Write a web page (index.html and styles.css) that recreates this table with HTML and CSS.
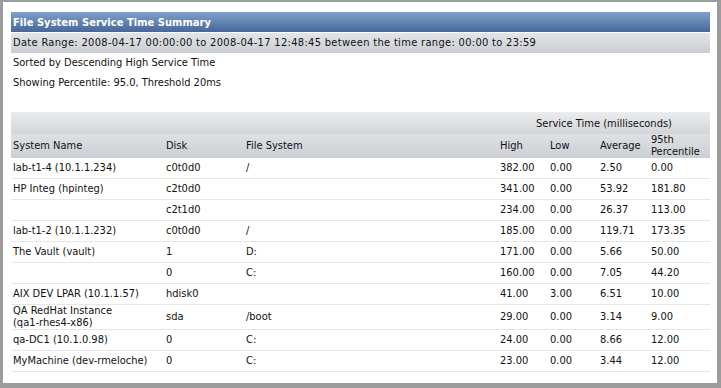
FILE: index.html
```html
<!DOCTYPE html>
<html>
<head>
<meta charset="utf-8">
<link rel="stylesheet" href="styles.css">
</head>
<body>
<div class="frame">
  <div class="panel">
    <div class="title">File System Service Time Summary</div>
    <div class="daterange">Date Range: 2008-04-17 00:00:00 to 2008-04-17 12:48:45 between the time range: 00:00 to 23:59</div>
    <div class="info">Sorted by Descending High Service Time</div>
    <div class="info">Showing Percentile: 95.0, Threshold 20ms</div>
    <table class="report">
      <colgroup>
        <col class="c-sys"><col class="c-disk"><col class="c-fs"><col class="c-high"><col class="c-low"><col class="c-avg"><col class="c-pct">
      </colgroup>
      <thead>
        <tr class="band1">
          <th colspan="3"></th>
          <th colspan="4" class="group">Service Time (milliseconds)</th>
        </tr>
        <tr class="band2">
          <th>System Name</th><th>Disk</th><th>File System</th><th>High</th><th>Low</th><th>Average</th><th class="pct">95th<br>Percentile</th>
        </tr>
      </thead>
      <tbody>
        <tr><td>lab-t1-4 (10.1.1.234)</td><td>c0t0d0</td><td>/</td><td>382.00</td><td>0.00</td><td>2.50</td><td>0.00</td></tr>
        <tr><td>HP Integ (hpinteg)</td><td>c2t0d0</td><td></td><td>341.00</td><td>0.00</td><td>53.92</td><td>181.80</td></tr>
        <tr><td></td><td>c2t1d0</td><td></td><td>234.00</td><td>0.00</td><td>26.37</td><td>113.00</td></tr>
        <tr><td>lab-t1-2 (10.1.1.232)</td><td>c0t0d0</td><td>/</td><td>185.00</td><td>0.00</td><td>119.71</td><td>173.35</td></tr>
        <tr><td>The Vault (vault)</td><td>1</td><td>D:</td><td>171.00</td><td>0.00</td><td>5.66</td><td>50.00</td></tr>
        <tr><td></td><td>0</td><td>C:</td><td>160.00</td><td>0.00</td><td>7.05</td><td>44.20</td></tr>
        <tr><td>AIX DEV LPAR (10.1.1.57)</td><td>hdisk0</td><td></td><td>41.00</td><td>3.00</td><td>6.51</td><td>10.00</td></tr>
        <tr><td>QA RedHat Instance<br>(qa1-rhes4-x86)</td><td>sda</td><td>/boot</td><td>29.00</td><td>0.00</td><td>3.14</td><td>9.00</td></tr>
        <tr><td>qa-DC1 (10.1.0.98)</td><td>0</td><td>C:</td><td>24.00</td><td>0.00</td><td>8.66</td><td>12.00</td></tr>
        <tr><td>MyMachine (dev-rmeloche)</td><td>0</td><td>C:</td><td>23.00</td><td>0.00</td><td>3.44</td><td>12.00</td></tr>
      </tbody>
    </table>
  </div>
</div>
</body>
</html>
```

FILE: styles.css
```css
html, body {
  margin: 0;
  padding: 0;
}
body {
  width: 721px;
  height: 388px;
  background: #9c9c9c;
  font-family: "DejaVu Sans Condensed", "DejaVu Sans", sans-serif;
  font-size: 11px;
  color: #111;
  overflow: hidden;
}
.frame {
  padding: 2px 4px 5px 3px;
}
.panel {
  background: #fff;
  height: 381px;
  padding: 10px 7px 0 8px;
  box-sizing: border-box;
}
.title {
  height: 20px;
  line-height: 21px;
  padding-left: 2px;
  color: #fff;
  font-weight: bold;
  letter-spacing: 0.05px;
  background: linear-gradient(#7ea1c9, #48669a);
}
.daterange {
  margin-top: 1px;
  height: 20px;
  line-height: 20px;
  padding-left: 2px;
  letter-spacing: 0.32px;
  background: linear-gradient(#e3e5e8, #c9cdd2);
}
.info {
  height: 20px;
  line-height: 20px;
  padding-left: 2px;
}
.report {
  margin-top: 19px;
  width: 699px;
  table-layout: fixed;
  border-collapse: collapse;
  border-spacing: 0;
}
.c-sys { width: 153px; }
.c-disk { width: 80px; }
.c-fs { width: 254px; }
.c-high { width: 50px; }
.c-low { width: 50px; }
.c-avg { width: 51px; }
.c-pct { width: 61px; }
.report th {
  font-weight: normal;
  text-align: left;
  padding: 0 2px;
  line-height: 12px;
  vertical-align: middle;
}
.report th.pct {
  line-height: 12px;
  white-space: nowrap;
}
.band1 th {
  height: 20px;
  background: linear-gradient(#ebecee, #d2d5d9);
}
.band1 .group {
  text-align: center;
  padding-top: 2px;
}
.band2 th {
  height: 24px;
  background: linear-gradient(#dee0e3, #cbcfd4);
}
.report td {
  height: 20px;
  padding: 0 2px;
  line-height: 12px;
  vertical-align: middle;
  border-bottom: 1px solid #e6e6e6;
  white-space: nowrap;
}
```
